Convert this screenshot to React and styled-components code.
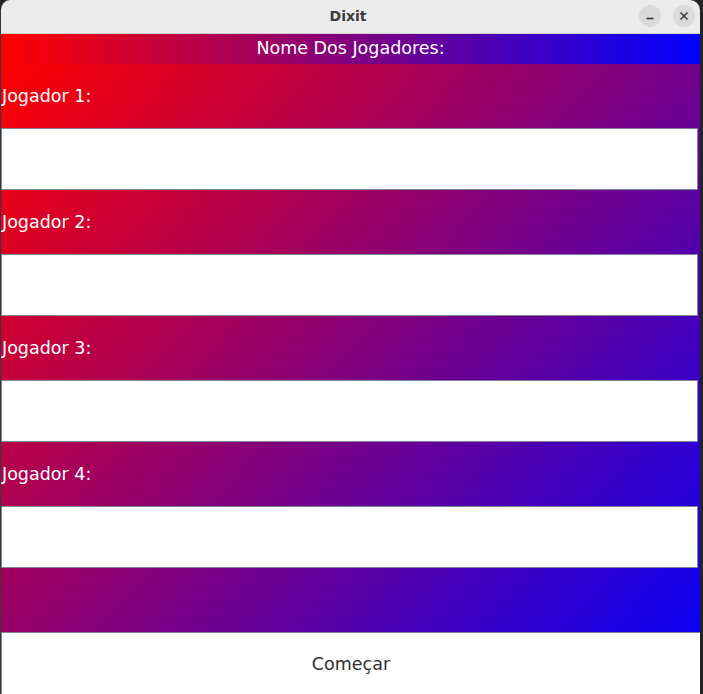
import React from "react";
import styled, { createGlobalStyle } from "styled-components";

const players = ["Jogador 1:", "Jogador 2:", "Jogador 3:", "Jogador 4:"];

const App = () => {
  return (
    <>
      <GlobalStyle />
      <Desktop>
        <Window>
          <TitleBar>
            <span />
            <Title>Dixit</Title>
            <Controls>
              <RoundButton aria-label="minimize">
                <svg width="10" height="10" viewBox="0 0 10 10">
                  <path d="M1.5 7.5h7" stroke="#2e2e2e" strokeWidth="1.4" />
                </svg>
              </RoundButton>
              <RoundButton aria-label="close">
                <svg width="10" height="10" viewBox="0 0 10 10">
                  <path
                    d="M1.5 1.5l7 7M8.5 1.5l-7 7"
                    stroke="#2e2e2e"
                    strokeWidth="1.4"
                  />
                </svg>
              </RoundButton>
            </Controls>
          </TitleBar>
          <Header>Nome Dos Jogadores:</Header>
          <Body>
            {players.map((name) => (
              <React.Fragment key={name}>
                <Label>{name}</Label>
                <NameInput type="text" />
              </React.Fragment>
            ))}
            <Label />
            <StartButton>Começar</StartButton>
          </Body>
        </Window>
      </Desktop>
    </>
  );
};

const GlobalStyle = createGlobalStyle`
  html, body {
    margin: 0;
    padding: 0;
    background: #1f1f1f;
  }
  * {
    box-sizing: border-box;
  }
`;

const Desktop = styled.div`
  width: 703px;
  height: 694px;
  overflow: hidden;
  background: #242424;
`;

const Window = styled.div`
  width: 700px;
  height: 694px;
  display: flex;
  flex-direction: column;
  border-left: 1px solid #383838;
  border-radius: 10px 10px 0 0;
  overflow: hidden;
  font-family: "DejaVu Sans", "Liberation Sans", sans-serif;
`;

const TitleBar = styled.div`
  height: 34px;
  flex: none;
  display: grid;
  grid-template-columns: 1fr auto 1fr;
  align-items: center;
  background: #ebebeb;
  border-bottom: 1px solid #d2d2d2;
  padding-right: 5px;
`;

const Title = styled.div`
  font-size: 14px;
  font-weight: bold;
  color: #3b3b3b;
  padding-bottom: 1px;
`;

const Controls = styled.div`
  display: flex;
  justify-content: flex-end;
  gap: 12px;
  padding-bottom: 2px;
`;

const RoundButton = styled.div`
  width: 22px;
  height: 22px;
  border-radius: 50%;
  background: #dadada;
  display: flex;
  align-items: center;
  justify-content: center;
`;

const Header = styled.div`
  height: 30px;
  flex: none;
  display: flex;
  align-items: center;
  justify-content: center;
  background: linear-gradient(to right, #ff0000, #0000ff);
  color: #fff;
  font-size: 17.5px;
  padding-bottom: 2px;
`;

const Body = styled.div`
  flex: 1;
  display: grid;
  grid-template-rows: repeat(5, 64px 62px);
  background: linear-gradient(132deg, #ff0000, #0000ff);
`;

const Label = styled.div`
  display: flex;
  align-items: center;
  padding-left: 1px;
  color: #fff;
  font-size: 17.5px;
`;

const NameInput = styled.input`
  width: 697px;
  height: 62px;
  margin: 0;
  border: 1px solid #7d8894;
  background: #fff;
  outline: none;
  font-family: inherit;
  font-size: 15px;
`;

const StartButton = styled.button`
  width: 100%;
  height: 62px;
  margin: 0;
  border: none;
  border-top: 1px solid #7d8894;
  border-left: 1px solid #7d8894;
  background: #fff;
  color: #2e2e2e;
  font-family: inherit;
  font-size: 17.5px;
`;

export default App;
